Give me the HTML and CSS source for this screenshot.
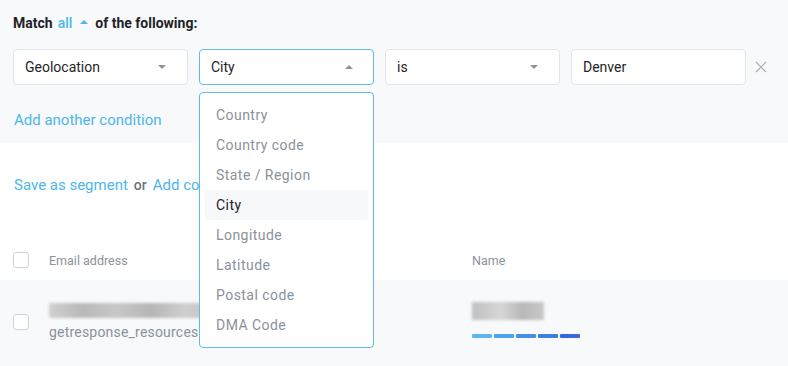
FILE: index.html
```html
<!DOCTYPE html>
<html>
<head>
<meta charset="utf-8">
<link rel="stylesheet" href="styles.css">
</head>
<body>
<div class="page">
  <section class="filters">
    <div class="match">Match <span class="all">all</span> <span class="caret-up blue"></span> of the following:</div>
    <div class="conditions">
      <div class="select"><span>Geolocation</span><span class="caret-down"></span></div>
      <div class="select open">
        <span>City</span><span class="caret-up"></span>
        <ul class="menu">
          <li>Country</li>
          <li>Country code</li>
          <li>State / Region</li>
          <li class="active">City</li>
          <li>Longitude</li>
          <li>Latitude</li>
          <li>Postal code</li>
          <li>DMA Code</li>
        </ul>
      </div>
      <div class="select"><span>is</span><span class="caret-down"></span></div>
      <div class="select input"><span>Denver</span></div>
      <svg class="remove" width="12" height="12" viewBox="0 0 12 12"><path d="M1 1 L11 11 M11 1 L1 11" stroke="#a9b0b7" stroke-width="1.2" fill="none"/></svg>
    </div>
    <div class="add-link">Add another condition</div>
  </section>
  <div class="save-line"><span class="link">Save as segment</span><span class="or">or</span><span class="link">Add contacts</span></div>
  <div class="table">
    <div class="thead">
      <span class="checkbox"></span>
      <span class="col-email">Email address</span>
      <span class="col-name">Name</span>
    </div>
    <div class="trow">
      <span class="checkbox"></span>
      <div class="col-email">
        <div class="blur blur-email"></div>
        <div class="email-text">getresponse_resources</div>
      </div>
      <div class="col-name">
        <div class="blur blur-name"></div>
        <div class="bars">
          <span class="bar b1"></span><span class="bar b2"></span><span class="bar b3"></span><span class="bar b4"></span><span class="bar b5"></span>
        </div>
      </div>
    </div>
  </div>
</div>
</body>
</html>
```
FILE: styles.css
```css
* { box-sizing: border-box; }
html, body { margin: 0; padding: 0; }
body {
  width: 788px;
  height: 366px;
  overflow: hidden;
  background: #ffffff;
  font-family: Roboto, "Liberation Sans", Arial, sans-serif;
  color: #1f2328;
}
.filters {
  background: #f7f9fa;
  height: 143px;
  padding: 14px 13px 0 13px;
}
.match {
  font-size: 14px;
  font-weight: 700;
  line-height: 18px;
  display: flex;
  align-items: center;
  gap: 4px;
  color: #1f2328;
}
.match .all { color: #4db6ea; font-weight: 500; margin-left: 1px; }
.caret-up, .caret-down {
  display: inline-block;
  width: 0;
  height: 0;
  border-left: 4px solid transparent;
  border-right: 4px solid transparent;
}
.caret-up { border-bottom: 4px solid #8b949d; }
.caret-down { border-top: 4px solid #8b949d; }
.caret-up.blue { border-bottom-color: #4db6ea; margin: 0 3px 2px 4px; }
.conditions {
  display: flex;
  align-items: center;
  gap: 11px;
  margin-top: 17px;
}
.select {
  position: relative;
  width: 175px;
  height: 36px;
  background: #ffffff;
  border: 1px solid #e2e6ea;
  border-radius: 4px;
  padding: 0 21px 0 11px;
  display: flex;
  align-items: center;
  justify-content: space-between;
  font-size: 14px;
  color: #1f2328;
}
.select.open { border-color: #63bbe8; padding-right: 20px; }
.remove { margin-left: -2px; }
.menu {
  position: absolute;
  left: -1px;
  top: 42px;
  width: 175px;
  margin: 0;
  padding: 7px 5px 7px 5px;
  list-style: none;
  background: #ffffff;
  border: 1px solid #63bbe8;
  border-radius: 4px;
  z-index: 5;
}
.menu li {
  height: 30px;
  line-height: 30px;
  padding-left: 11px;
  font-size: 14px;
  color: #8a929b;
  letter-spacing: 0.45px;
}
.menu li.active {
  color: #1f2328;
  background: #f7f8fa;
  border-radius: 3px;
}
.add-link {
  margin-top: 26px;
  font-size: 15px;
  line-height: 18px;
  color: #4db6ea;
  padding-left: 1px;
}
.save-line {
  margin-top: 33px;
  margin-left: 14px;
  width: 185px;
  overflow: hidden;
  white-space: nowrap;
  font-size: 15px;
  line-height: 18px;
  display: flex;
  gap: 6px;
}
.save-line .link { color: #4db6ea; }
.save-line .or { color: #6b737c; font-weight: 500; font-size: 14px; }
.table { margin-top: 46px; }
.thead {
  height: 40px;
  display: flex;
  align-items: center;
  padding-left: 13px;
  font-size: 12.5px;
  color: #8a929b;
}
.checkbox {
  width: 16px;
  height: 16px;
  border: 1px solid #cdd3d8;
  border-radius: 3px;
  background: #fff;
  flex: none;
}
.thead .col-email { margin-left: 20px; width: 423px; }
.trow {
  height: 90px;
  background: #f7f9fa;
  display: flex;
  align-items: flex-start;
  padding-left: 13px;
}
.trow .checkbox { margin-top: 34px; }
.trow .col-email {
  margin-left: 20px;
  width: 423px;
  padding-top: 23px;
}
.blur { filter: blur(1.5px); }
.blur-email {
  width: 170px;
  height: 15px;
  background: linear-gradient(90deg, #d0d0d0, #b8b8b8 20%, #c8c8c8 40%, #b5b5b5 60%, #cfcfcf 80%, #bdbdbd);
  margin-bottom: 5px;
}
.email-text {
  font-size: 14px;
  line-height: 18px;
  color: #8a929b;
  white-space: nowrap;
  letter-spacing: 0.2px;
}
.trow .col-name { padding-top: 22px; }
.blur-name {
  width: 72px;
  height: 18px;
  background: linear-gradient(90deg, #c0c0c0, #d6d6d6 40%, #b8b8b8 70%, #c9c9c9);
}
.bars { display: flex; gap: 2px; margin-top: 14px; }
.bar { width: 20px; height: 4px; border-radius: 1px; }
.b1 { background: #5ab7f3; }
.b2 { background: #4ea3ee; }
.b3 { background: #4690ea; }
.b4 { background: #3f7de6; }
.b5 { background: #3a66e2; }
```
